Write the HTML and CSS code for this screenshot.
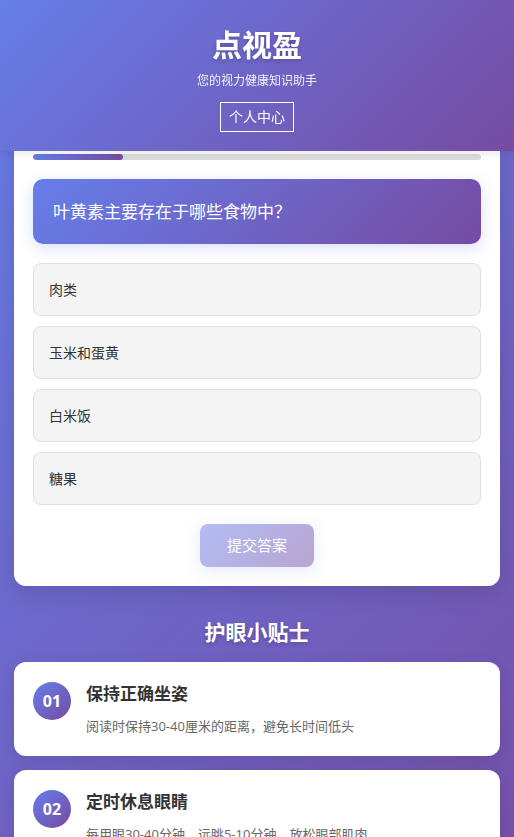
FILE: index.html
```html
<!DOCTYPE html>
<html lang="zh-CN">
<head>
  <meta charset="utf-8">
  <meta name="viewport" content="width=device-width, initial-scale=1">
  <title>点视盈</title>
  <link rel="stylesheet" href="styles.css">
</head>
<body>
  <header class="header">
    <h1 class="header-title">点视盈</h1>
    <p class="header-subtitle">您的视力健康知识助手</p>
    <button class="profile-button">个人中心</button>
  </header>

  <main class="main">
    <section class="quiz-card">
      <div class="progress">
        <div class="progress-fill" style="width: 20%"></div>
      </div>

      <div class="question">叶黄素主要存在于哪些食物中？</div>

      <div class="options">
        <div class="option">肉类</div>
        <div class="option">玉米和蛋黄</div>
        <div class="option">白米饭</div>
        <div class="option">糖果</div>
      </div>

      <div class="submit-row">
        <button class="submit-button" disabled>提交答案</button>
      </div>
    </section>

    <section class="tips">
      <h2 class="tips-title">护眼小贴士</h2>

      <div class="tip-card">
        <div class="tip-number">01</div>
        <div class="tip-body">
          <h3 class="tip-title">保持正确坐姿</h3>
          <p class="tip-text">阅读时保持30-40厘米的距离，避免长时间低头</p>
        </div>
      </div>

      <div class="tip-card">
        <div class="tip-number">02</div>
        <div class="tip-body">
          <h3 class="tip-title">定时休息眼睛</h3>
          <p class="tip-text">每用眼30-40分钟，远眺5-10分钟，放松眼部肌肉</p>
        </div>
      </div>

      <div class="tip-card">
        <div class="tip-number">03</div>
        <div class="tip-body">
          <h3 class="tip-title">均衡饮食</h3>
          <p class="tip-text">多吃富含叶黄素和维生素A的食物</p>
        </div>
      </div>
    </section>
  </main>
</body>
</html>
```

FILE: styles.css
```css
/* Base styles */
* {
  box-sizing: border-box;
}

body {
  margin: 0;
  font-family: "Open Sans", "Noto Sans CJK SC", sans-serif;
  color: #333;
  background: linear-gradient(135deg, #667eea 0%, #764ba2 100%);
  min-height: 100vh;
}

/* Header */
.header {
  position: fixed;
  top: 0;
  left: 0;
  right: 0;
  z-index: 10;
  height: 151px;
  padding: 25px 20px 19px;
  text-align: center;
  color: #fff;
  background: linear-gradient(135deg, #667eea 0%, #764ba2 100%);
  box-shadow: 0 2px 10px rgba(0, 0, 0, 0.1);
}

.header-title {
  margin: 0 0 7px;
  font-size: 30px;
  line-height: 40px;
  font-weight: 700;
  text-shadow: 0 2px 4px rgba(0, 0, 0, 0.2);
}

.header-subtitle {
  margin: 0 0 12px;
  font-size: 12px;
  line-height: 18px;
  opacity: 0.9;
}

.profile-button {
  height: 30px;
  padding: 0 8px;
  font-family: inherit;
  font-size: 14px;
  line-height: 28px;
  color: #fff;
  background: transparent;
  border: 1px solid #fff;
  border-radius: 0;
  cursor: pointer;
}

/* Main */
.main {
  padding: 134px 14px 30px;
}

.quiz-card {
  background: #fff;
  border-radius: 12px;
  padding: 20px 19px 19px;
  box-shadow: 0 8px 24px rgba(0, 0, 0, 0.12);
}

.progress {
  height: 6px;
  margin-bottom: 19px;
  border-radius: 3px;
  background: #ddd;
  overflow: hidden;
}

.progress-fill {
  height: 100%;
  border-radius: 3px;
  background: linear-gradient(90deg, #667eea, #764ba2);
}

.question {
  padding: 20px;
  font-size: 17px;
  line-height: 25px;
  color: #fff;
  border-radius: 10px;
  background: linear-gradient(135deg, #667eea 0%, #764ba2 100%);
  box-shadow: 0 4px 15px rgba(102, 126, 234, 0.25);
  margin-bottom: 19px;
}

.options {
  display: flex;
  flex-direction: column;
  gap: 10px;
}

.option {
  padding: 15px;
  font-size: 14px;
  line-height: 21px;
  color: #333;
  background: #f4f4f4;
  border: 1px solid #e0e0e0;
  border-radius: 8px;
  cursor: pointer;
}

.submit-row {
  display: flex;
  justify-content: center;
  margin-top: 19px;
}

.submit-button {
  padding: 11px 27px;
  font-family: inherit;
  font-size: 15px;
  line-height: 21px;
  color: #fff;
  border: none;
  border-radius: 8px;
  background: linear-gradient(135deg, #667eea 0%, #764ba2 100%);
  box-shadow: 0 4px 15px rgba(102, 126, 234, 0.3);
  opacity: 0.5;
}

/* Tips */
.tips {
  margin-top: 32px;
}

.tips-title {
  margin: 0 0 16px;
  text-align: center;
  font-size: 21px;
  line-height: 28px;
  font-weight: 700;
  color: #fff;
  text-shadow: 0 2px 4px rgba(0, 0, 0, 0.2);
}

.tip-card {
  display: flex;
  align-items: flex-start;
  gap: 15px;
  padding: 20px 19px;
  margin-bottom: 14px;
  background: #fff;
  border-radius: 12px;
  box-shadow: 0 4px 15px rgba(0, 0, 0, 0.1);
}

.tip-number {
  flex: 0 0 38px;
  width: 38px;
  height: 38px;
  border-radius: 50%;
  display: flex;
  align-items: center;
  justify-content: center;
  font-size: 16px;
  font-weight: 700;
  color: #fff;
  background: linear-gradient(135deg, #667eea 0%, #764ba2 100%);
}

.tip-body {
  flex: 1;
}

.tip-title {
  margin: 0 0 10px;
  font-size: 17px;
  line-height: 24px;
  font-weight: 700;
  color: #333;
}

.tip-text {
  margin: 0;
  font-size: 13px;
  line-height: 20px;
  color: #666;
}
```
